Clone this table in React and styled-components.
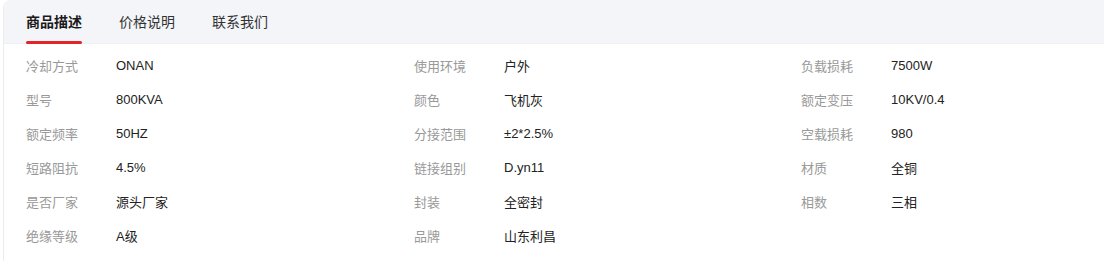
import React, { useState } from 'react';
import styled, { createGlobalStyle } from 'styled-components';

const GlobalStyle = createGlobalStyle`
    body {
        margin: 0;
        overflow: hidden;
        background: #fff;
        font-family: "Liberation Sans", "Noto Sans CJK SC", sans-serif;
    }
`;

const Card = styled.div`
    box-sizing: border-box;
    margin-left: 3px;
    width: 1101px;
    min-height: 100vh;
    border-left: 1px solid #ececef;
    border-radius: 8px 0 0 0;
    background: #fff;
    overflow: hidden;
`;

const TabBar = styled.div`
    display: flex;
    gap: 37px;
    height: 43px;
    padding: 0 22px;
    background: #f4f5f9;
    border-bottom: 1px solid #eef0f4;
`;

const Tab = styled.div`
    position: relative;
    display: flex;
    align-items: center;
    padding-bottom: 2px;
    font-size: 14px;
    font-weight: ${p => (p.$active ? 700 : 400)};
    color: ${p => (p.$active ? '#1a1a1a' : '#333')};
    cursor: pointer;
    &::after {
        content: '';
        display: ${p => (p.$active ? 'block' : 'none')};
        position: absolute;
        left: 0;
        right: 0;
        bottom: -1px;
        height: 3px;
        border-radius: 2px;
        background: #e4242a;
    }
`;

const Specs = styled.div`
    display: grid;
    grid-template-columns: 388px 387px 388px;
    padding: 4px 22px 0;
`;

const Item = styled.div`
    display: flex;
    align-items: center;
    height: 34px;
    font-size: 13px;
`;

const Label = styled.span`
    width: 90px;
    color: #999;
`;

const Value = styled.span`
    color: #222;
`;

const tabs = ['商品描述', '价格说明', '联系我们'];

const specs = [
    ['冷却方式', 'ONAN'], ['使用环境', '户外'], ['负载损耗', '7500W'],
    ['型号', '800KVA'], ['颜色', '飞机灰'], ['额定变压', '10KV/0.4'],
    ['额定频率', '50HZ'], ['分接范围', '±2*2.5%'], ['空载损耗', '980'],
    ['短路阻抗', '4.5%'], ['链接组别', 'D.yn11'], ['材质', '全铜'],
    ['是否厂家', '源头厂家'], ['封装', '全密封'], ['相数', '三相'],
    ['绝缘等级', 'A级'], ['品牌', '山东利昌'],
];

const App = () => {
    const [active, setActive] = useState(0);
    return (
        <>
            <GlobalStyle />
            <Card>
                <TabBar>
                    {tabs.map((t, i) => (
                        <Tab key={t} $active={i === active} onClick={() => setActive(i)}>{t}</Tab>
                    ))}
                </TabBar>
                <Specs>
                    {specs.map(([k, v]) => (
                        <Item key={k}>
                            <Label>{k}</Label>
                            <Value>{v}</Value>
                        </Item>
                    ))}
                </Specs>
            </Card>
        </>
    );
};

export default App;
